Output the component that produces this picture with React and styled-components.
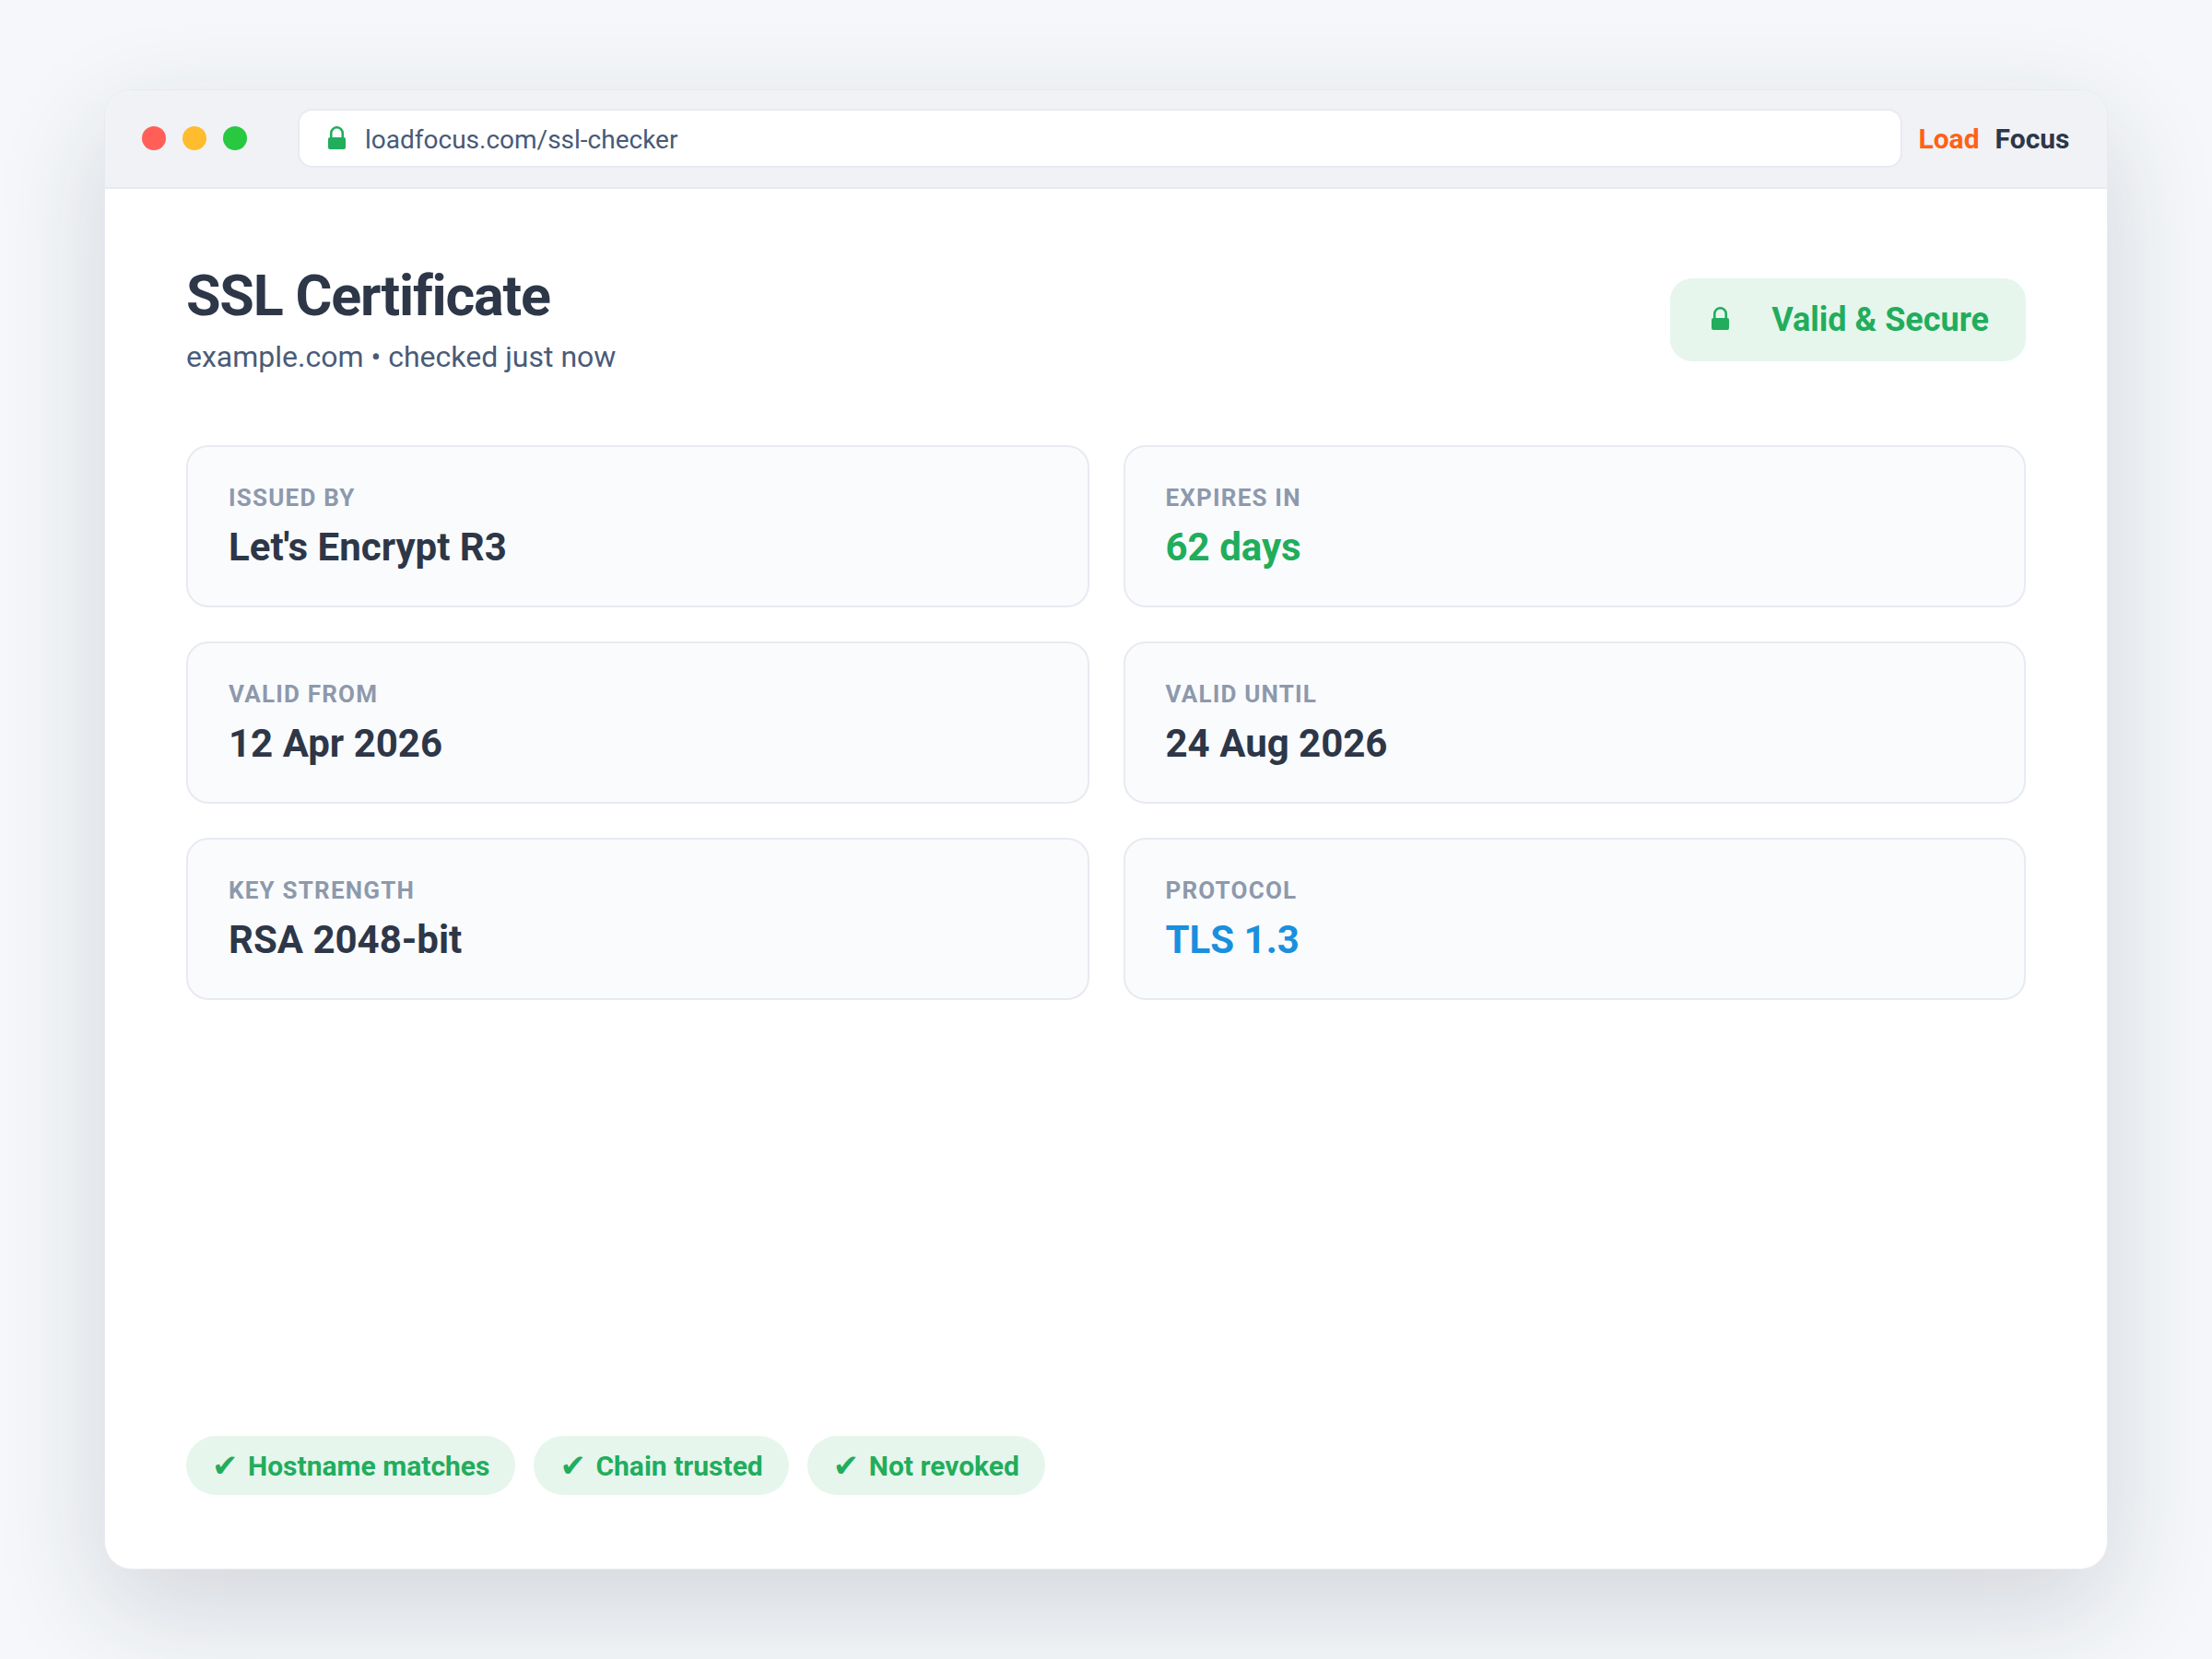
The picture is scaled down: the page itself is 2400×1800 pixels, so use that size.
import React from 'react';
import styled, { createGlobalStyle } from 'styled-components';

const GlobalStyle = createGlobalStyle`
  html, body {
    margin: 0;
    padding: 0;
    background: #f5f7fa;
    font-family: Roboto, "Liberation Sans", sans-serif;
  }
`;

const Page = styled.div`
  width: 2400px;
  height: 1800px;
  box-sizing: border-box;
  padding: 97px 113px 97px;
  background: #f5f7fa;
  overflow: hidden;
`;

const Window = styled.div`
  height: 100%;
  box-sizing: border-box;
  display: flex;
  flex-direction: column;
  background: #ffffff;
  border: 1.5px solid #e8eaf0;
  border-radius: 30px;
  box-shadow: 0 40px 120px rgba(30, 41, 59, 0.16);
  overflow: hidden;
`;

const TitleBar = styled.div`
  height: 106.5px;
  box-sizing: border-box;
  display: flex;
  align-items: center;
  padding: 0 40.5px 0 39.5px;
  background: #f0f2f6;
  border-bottom: 2px solid #e8eaf1;
`;

const Dots = styled.div`
  display: flex;
  gap: 18px;
  margin-right: 55px;
`;

const Dot = styled.span`
  width: 26px;
  height: 26px;
  border-radius: 50%;
  background: ${(p) => p.$color};
`;

const UrlBar = styled.div`
  flex: 1;
  height: 64px;
  box-sizing: border-box;
  display: flex;
  align-items: center;
  gap: 21.5px;
  padding: 2px 0 0 31px;
  background: #ffffff;
  border: 2px solid #e8eaf1;
  border-radius: 16px;
  color: #475a78;
  font-size: 28px;
`;

const Brand = styled.div`
  display: flex;
  gap: 17px;
  margin-left: 17px;
  padding-top: 1px;
  font-size: 30px;
  font-weight: 700;
`;

const BrandPart = styled.span`
  color: ${(p) => p.$color};
`;

const Content = styled.main`
  flex: 1;
  display: flex;
  flex-direction: column;
  padding: 80px 88px;
`;

const Header = styled.header`
  display: flex;
  justify-content: space-between;
  align-items: flex-start;
  margin-bottom: 74px;
`;

const Title = styled.h1`
  margin: 0 0 8px;
  font-size: 61px;
  line-height: 72px;
  font-weight: 700;
  letter-spacing: -1.2px;
  color: #2d3748;
`;

const Subtitle = styled.p`
  margin: 0;
  font-size: 32px;
  line-height: 44px;
  color: #4a5b78;
`;

const StatusBadge = styled.div`
  display: flex;
  align-items: center;
  gap: 46px;
  height: 90px;
  margin-top: 17px;
  padding: 0 40px 0 45px;
  background: #e6f6ed;
  border-radius: 24px;
  color: #21ad5c;
  font-size: 36px;
  font-weight: 700;
`;

const Grid = styled.div`
  display: grid;
  grid-template-columns: 1fr 1fr;
  gap: 37px;
`;

const Card = styled.div`
  height: 176px;
  box-sizing: border-box;
  padding: 39px 44px 0;
  background: #fafbfd;
  border: 2px solid #e8eaf1;
  border-radius: 24px;
`;

const Label = styled.div`
  font-size: 26px;
  line-height: 32px;
  font-weight: 700;
  letter-spacing: 1.2px;
  text-transform: uppercase;
  color: #8d99ac;
`;

const Value = styled.div`
  margin-top: 10px;
  font-size: 42px;
  line-height: 56px;
  font-weight: 700;
  color: ${(p) => p.$color || '#2d3748'};
`;

const Pills = styled.div`
  display: flex;
  gap: 20px;
  margin-top: auto;
`;

const Pill = styled.div`
  display: flex;
  align-items: center;
  gap: 10.5px;
  height: 64px;
  padding: 0 28px;
  background: #e6f6ed;
  border-radius: 32px;
  color: #21ad5c;
  font-size: 30px;
  font-weight: 700;
`;

const Check = styled.span`
  font-family: "DejaVu Sans", sans-serif;
  font-size: 34px;
  font-weight: 400;
`;

const LockIcon = styled.svg`
  flex: none;
  margin-bottom: 3px;
`;

const Lock = () => (
  <LockIcon width="19" height="25" viewBox="0 0 19 25" aria-hidden="true">
    <path d="M3.25 14V7.5a6.25 6.25 0 0 1 12.5 0V14" fill="none" stroke="#21ad5c" strokeWidth="2.6" />
    <rect x="0" y="12" width="19" height="13" rx="2" fill="#21ad5c" />
  </LockIcon>
);

const cards = [
  { label: 'Issued by', value: "Let's Encrypt R3" },
  { label: 'Expires in', value: '62 days', color: '#21ad5c' },
  { label: 'Valid from', value: '12 Apr 2026' },
  { label: 'Valid until', value: '24 Aug 2026' },
  { label: 'Key strength', value: 'RSA 2048-bit' },
  { label: 'Protocol', value: 'TLS 1.3', color: '#1990de' },
];

const checks = ['Hostname matches', 'Chain trusted', 'Not revoked'];

const App = () => (
  <Page>
    <GlobalStyle />
    <Window>
      <TitleBar>
        <Dots>
          <Dot $color="#ff5f57" />
          <Dot $color="#febc2e" />
          <Dot $color="#28c840" />
        </Dots>
        <UrlBar>
          <Lock />
          loadfocus.com/ssl-checker
        </UrlBar>
        <Brand>
          <BrandPart $color="#ff6116">Load</BrandPart>
          <BrandPart $color="#2d3748">Focus</BrandPart>
        </Brand>
      </TitleBar>
      <Content>
        <Header>
          <div>
            <Title>SSL Certificate</Title>
            <Subtitle>example.com • checked just now</Subtitle>
          </div>
          <StatusBadge>
            <Lock />
            Valid &amp; Secure
          </StatusBadge>
        </Header>
        <Grid>
          {cards.map((card) => (
            <Card key={card.label}>
              <Label>{card.label}</Label>
              <Value $color={card.color}>{card.value}</Value>
            </Card>
          ))}
        </Grid>
        <Pills>
          {checks.map((text) => (
            <Pill key={text}>
              <Check>✔</Check>
              {text}
            </Pill>
          ))}
        </Pills>
      </Content>
    </Window>
  </Page>
);

export default App;
